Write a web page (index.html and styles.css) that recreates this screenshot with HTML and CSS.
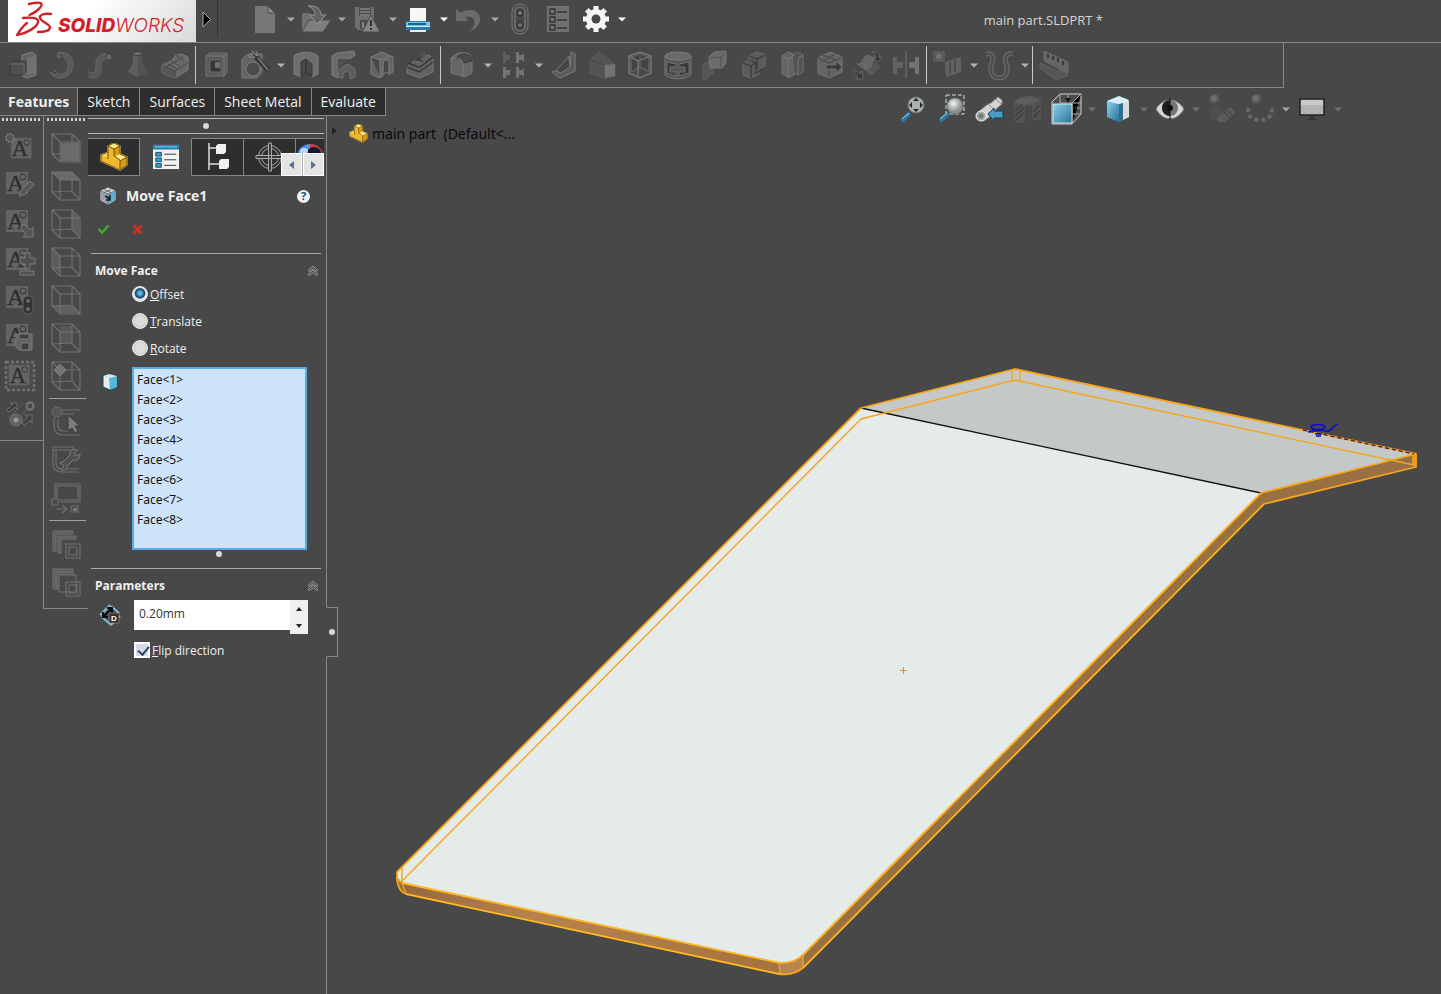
FILE: index.html
```html
<!DOCTYPE html>
<html lang="en">
<head>
<meta charset="utf-8">
<title>main part.SLDPRT *</title>
<link rel="stylesheet" href="styles.css">
</head>
<body>
<svg class="defs" width="0" height="0" aria-hidden="true">
  <defs>
    <linearGradient id="blue" x1="0" y1="0" x2="1" y2="1"><stop offset="0" stop-color="#8fd0ea"/><stop offset="1" stop-color="#2a7196"/></linearGradient>
    <radialGradient id="ball" cx="40%" cy="35%"><stop offset="0" stop-color="#f2f6f4"/><stop offset="1" stop-color="#87928f"/></radialGradient>
    <radialGradient id="dim" cx="40%" cy="35%"><stop offset="0" stop-color="#7c7c7c"/><stop offset="1" stop-color="#4a4a4a"/></radialGradient>
    <linearGradient id="edge" x1="0" y1="0" x2="1" y2="0"><stop offset="0" stop-color="#94683e"/><stop offset=".35" stop-color="#b8824d"/><stop offset="1" stop-color="#a5733f"/></linearGradient>
    <symbol id="caret" viewBox="0 0 8 5"><path d="M0 .5h8L4 4.5z" fill="currentColor"/></symbol>
    <symbol id="part" viewBox="0 0 28 28">
      <path d="M1 12l7-3V3l6-3 6 3v8l7 3v8l-7 5L1 18z" fill="#f4d25a" stroke="#fff2ae" stroke-width="1.2"/>
      <path d="M8 3l6 3v7l7 4v10L1 18v-6l7 3z" fill="#efb92e"/>
      <path d="M8 3l6-3 6 3-6 3zM14 12l6-2 7 4-7 4z" fill="#ffe98c"/>
      <path d="M14 6l6-3v8l-6 3zM20 18l7-4v8l-7 5z" fill="#d99c10"/>
      <path d="M1 12l7-3V3l6 3v7l6 4v10L1 18zM8 3l6-3 6 3-6 3M20 3v8l7 3-7 4M27 14v8l-7 5M8 9v7" fill="none" stroke="#72510d"/>
    </symbol>
    <symbol id="box" viewBox="0 0 30 30">
      <path d="M1 1h20l8 8v20H9l-8-8zM1 1l8 8h20M9 9v20M21 1v19M1 21l20-1 8 9" class="ln"/>
    </symbol>
    <symbol id="note" viewBox="0 0 30 30">
      <path d="M2 2h22v22H2z" fill="#646464"/><text x="3" y="21" class="note-a">A</text><circle cx="19" cy="7" r="3" fill="none" stroke="#343434" stroke-width="1"/>
    </symbol>
    <symbol id="up" viewBox="0 0 12 12"><path d="M1 5.500L6 1l5 4.500-1.500 1L6 3.500l-3.500 3zM1 9.500L6 5l5 4.500-1.500 1L6 7.500l-3.500 3z" fill="none" stroke="#b0b0b0" stroke-width=".8"/></symbol>
  </defs>
</svg>

<header class="titlebar">
  <div class="logo">
    <svg width="188" height="41" viewBox="0 0 188 41" role="img" aria-label="SOLIDWORKS">
      <g fill="none" stroke="#cf2127" stroke-width="2.400" stroke-linecap="round" stroke-linejoin="round">
        <path d="M21 4c5-1.500 12-2 12.500 0 .5 3-5 8-12 11"/>
        <path d="M15 18c9-1 16 0 15 4-1 5-10 11-21 13 3-5 6-9 10-12"/>
        <path d="M43 14c-7-1-12 1-11 4 1 4 11 6 10 10-1 3-6 4-12 4"/>
      </g>
      <text x="50" y="32"><tspan class="logo-bold">SOLID</tspan><tspan class="logo-light">WORKS</tspan></text>
    </svg>
  </div>
  <button class="logo-arrow" aria-label="Menu"><svg width="10" height="17" viewBox="0 0 10 17"><path d="M1 1l7.500 7.500L1 16z" fill="#000" stroke="#aaa"/></svg></button>
  <nav class="quick" aria-label="Quick access">
    <button class="qi" aria-label="New"><svg width="30" height="30" viewBox="0 0 30 30"><path d="M5 2h13l7 7v20H5z" fill="#777"/><path d="M18 2v7h7z" fill="#8d8d8d" stroke="#4d4d4d"/></svg></button><button class="qc" aria-label="New options"><svg width="8" height="5"><use href="#caret"/></svg></button>
    <button class="qi" aria-label="Open"><svg width="30" height="30" viewBox="0 0 30 30"><path d="M1 9h8l2 3h11v5l-6 9H1z" fill="#707070"/><path d="M8 16h22l-8 12H1z" fill="#7f7f7f" stroke="#4e4e4e"/><path d="M7 2c8-1 13 3 13 9h5l-9 9-7-9h5c0-4-2-7-7-9z" fill="#626262" stroke="#949494"/></svg></button><button class="qc" aria-label="Open options"><svg width="8" height="5"><use href="#caret"/></svg></button>
    <button class="qi" aria-label="Save"><svg width="30" height="30" viewBox="0 0 30 30"><path d="M3 3h19v19l-7 4H6l-3-3z" fill="#6f6f6f"/><path d="M7 3h12v9H7z" fill="#4b4b4b"/><path d="M8 5h10M8 8h10M8 11h10" stroke="#858585" stroke-width="1.500"/><path d="M8 16h8v9H8z" fill="#4b4b4b"/><path d="M10 18h2v6h-2z" fill="#888"/><path d="M19 11l9 17H10z" fill="#848484" stroke="#4a4a4a"/><path d="M19 16v6M19 24v2" stroke="#333" stroke-width="2"/></svg></button><button class="qc" aria-label="Save options"><svg width="8" height="5"><use href="#caret"/></svg></button>
    <button class="qi" aria-label="Print"><svg width="30" height="30" viewBox="0 0 30 30"><path d="M7 4h16v13H7z" fill="#f7f7f7"/><path d="M4 17h22l1 2v7H3v-7z" fill="#2b7ba5"/><path d="M3 18h24v4H3z" fill="#6dc5e8"/><path d="M5 19h18v2H5z" fill="#17678c"/><path d="M3 22h24v1H3z" fill="#d2edf7"/><path d="M7 26h16v2H7z" fill="#eee"/></svg></button><button class="qc on" aria-label="Print options"><svg width="8" height="5"><use href="#caret"/></svg></button>
    <button class="qi" aria-label="Undo"><svg width="30" height="30" viewBox="0 0 30 30"><path d="M2 5l4 4c9-6 20-3 20 6 0 6-4 10-10 12 7-8 6-16-5-14l4 4H2z" fill="#6b6b6b"/></svg></button><button class="qc" aria-label="Undo options"><svg width="8" height="5"><use href="#caret"/></svg></button>
    <button class="qi gap" aria-label="Rebuild"><svg width="30" height="32" viewBox="0 0 30 32"><rect x="7" y="1" width="16" height="30" rx="8" fill="#4a4a4a" stroke="#777"/><rect x="10" y="4" width="10" height="24" rx="5" fill="none" stroke="#686868" stroke-width="2"/><circle cx="15" cy="10" r="3.500" fill="#333"/><circle cx="15" cy="22" r="3.500" fill="#333"/><circle cx="15" cy="10" r="2" fill="#777"/><circle cx="15" cy="22" r="2" fill="#777"/></svg></button>
    <button class="qi gap" aria-label="File properties"><svg width="30" height="30" viewBox="0 0 30 30"><path d="M4 2h22v26H4z" fill="#717171"/><path d="M7 5h5v5H7zM7 13h5v5H7zM7 21h5v5H7zM14 8h10M14 16h10M14 24h10" fill="none" stroke="#333" stroke-width="1.400"/></svg></button>
    <button class="qi" aria-label="Options"><svg width="30" height="30" viewBox="0 0 30 30"><g stroke="#f5f5f5" stroke-width="5"><path d="M15 2v26M2 15h26M5.800 5.800l18.400 18.400M24.200 5.800L5.800 24.200"/></g><circle cx="15" cy="15" r="10" fill="#f5f5f5"/><circle cx="15" cy="15" r="4.500" fill="#484848"/></svg></button><button class="qc on" aria-label="Options list"><svg width="8" height="5"><use href="#caret"/></svg></button>
  </nav>
  <h1 class="doc-title">main part.SLDPRT *</h1>
</header>

<div class="ribbon" role="toolbar" aria-label="Features">
  <button aria-label="Extruded Boss"><svg width="30" height="30" viewBox="0 0 30 30"><path d="M14 5l10-3 4 3v20l-9 3-5-2z" fill="#686868" stroke="#888"/><path d="M19 8l8-2v17l-8 2z" fill="#777"/><path d="M2 14l3-3h13v10l-2 4H2z" fill="#505050" stroke="#363636"/><path d="M2 14h14v11" fill="none" stroke="#707070"/></svg></button>
  <button aria-label="Revolved Boss"><svg width="30" height="30" viewBox="0 0 30 30"><path d="M12 3c9-2 15 3 15 11 0 9-6 14-14 14-5 0-8-3-9-7h6c2 6 12 3 12-5 0-6-4-9-11-9z" fill="#5c5c5c" stroke="#6c6c6c"/><path d="M15 4l2 5M4 21l6 2" stroke="#333"/></svg></button>
  <button aria-label="Swept Boss"><svg width="30" height="30" viewBox="0 0 30 30"><path d="M5 25c9 4 10-3 10-10 1-8 5-9 9-7" fill="none" stroke="#5c5c5c" stroke-width="6"/><path d="M4 22c8 3 8-2 8-8 0-8 5-12 14-9" fill="none" stroke="#707070"/><circle cx="25" cy="7" r="3" fill="#707070" stroke="#444"/></svg></button>
  <button aria-label="Lofted Boss"><svg width="30" height="30" viewBox="0 0 30 30"><path d="M11 3h9c0 12 2 15 5 19l-9 5-10-5c4-5 5-9 5-19z" fill="#626262"/><path d="M16 4h4c0 12 2 15 5 19l-9 4z" fill="#555"/><ellipse cx="15.500" cy="3.500" rx="4.500" ry="2" fill="#777" stroke="#393939"/></svg></button>
  <button aria-label="Boundary Boss"><svg width="30" height="30" viewBox="0 0 30 30"><path d="M2 15l9-4 5-6 5-1 7 3v13l-13 8-13-5z" fill="#6e6e6e" stroke="#828282"/><path d="M2 16l13 5v7l-13-5z" fill="#5a5a5a"/><path d="M2 15l13 6 13-8M15 21v7M7 13l10 6M11 11l9 5M16 5l8 6M6 17l7-4 10-6" fill="none" stroke="#484848"/></svg></button>
  <span class="sep"></span>
  <button aria-label="Extruded Cut"><svg width="30" height="30" viewBox="0 0 30 30"><path d="M4 6l4-3h17v19l-3 4H4z" fill="#5c5c5c" stroke="#7d7d7d"/><path d="M4 6h18v20M22 6l3-3" fill="none" stroke="#888"/><path d="M8 10h11v12H8z" fill="#333" stroke="#777"/><path d="M13 12h5v6h-5z" fill="#777"/></svg></button>
  <button aria-label="Hole Wizard"><svg width="30" height="30" viewBox="0 0 30 30"><path d="M2 9l6-5h14v18l-5 6H2z" fill="#686868" stroke="#808080"/><circle cx="13" cy="19" r="7" fill="#4c4c4c" stroke="#888"/><path d="M13 4l15 16" stroke="#333" stroke-width="5"/><path d="M10 3l5 5M12 1l5 5M16 1l2 5M8 6l5 2M18 8l10 12" stroke="#858585" stroke-width="1.500"/></svg></button><button class="rc" aria-label="Hole options"><svg width="8" height="5"><use href="#caret"/></svg></button>
  <button aria-label="Revolved Cut"><svg width="30" height="30" viewBox="0 0 30 30"><path d="M3 6c5-5 19-5 24 0v18l-6 3V14l-6-5-5 5v13l-7-3z" fill="#747474" stroke="#888"/><path d="M15 9v14l-5 4V12zM15 9l6 5v12l-6-3z" fill="#4a4a4a" stroke="#333"/></svg></button>
  <button aria-label="Swept Cut"><svg width="30" height="30" viewBox="0 0 30 30"><path d="M3 6l5-3 17-2 1 4-4 3C13 10 9 15 9 28l-6-3z" fill="#707070" stroke="#888"/><path d="M9 9h12C14 11 10 17 9 26z" fill="#505050"/><path d="M9 27c0-9 7-14 12-12l5 4v8l-5 2v-6c-5-3-7-1-7 5z" fill="#606060" stroke="#797979"/></svg></button>
  <button aria-label="Lofted Cut"><svg width="30" height="30" viewBox="0 0 30 30"><path d="M4 7l11-5 11 5v15l-4 3V14c0-4-6-4-6 0v12l-4 2-8-4z" fill="#686868" stroke="#858585"/><path d="M4 7l9 3v17M13 10l11-4M16 24V13c0-4 6-4 6 0v9z" fill="#4a4a4a" stroke="#858585"/></svg></button>
  <button aria-label="Boundary Cut"><svg width="30" height="30" viewBox="0 0 30 30"><path d="M2 17l7-6c5 4 8-4 15-6l4 5v12l-13 6-13-5z" fill="#666" stroke="#808080"/><path d="M2 17l12 5 14-10M3 13l8 3c5 4 8-4 16-8M12 8l6 4" fill="none" stroke="#353535" stroke-width="1.500"/><circle cx="18" cy="5" r="3" fill="#555"/></svg></button>
  <span class="sep"></span>
  <button aria-label="Fillet"><svg width="30" height="30" viewBox="0 0 30 30"><path d="M4 8l7-5h8q6 1 6 8v12l-7 4-14-4z" fill="#6b6b6b" stroke="#808080"/><path d="M9 9q2-5 9-5 7 1 7 7l-9 2q0-5-7-4z" fill="#4a4a4a" stroke="#393939"/><path d="M4 8q12-1 12 6v12" fill="none" stroke="#858585"/></svg></button><button class="rc" aria-label="Fillet options"><svg width="8" height="5"><use href="#caret"/></svg></button>
  <button aria-label="Linear Pattern"><svg width="30" height="30" viewBox="0 0 30 30"><path d="M5 2h3v3h4v5H8v3H5z" fill="#606060"/><path d="M18 2h3v3h4V3h1v9h-1v-2h-4v3h-3zM5 17h3v3h4v5H8v3H5zM18 17h3v3h4v-2h1v9h-1v-2h-4v3h-3z" fill="#7b7b7b"/></svg></button><button class="rc" aria-label="Pattern options"><svg width="8" height="5"><use href="#caret"/></svg></button>
  <button aria-label="Rib"><svg width="30" height="30" viewBox="0 0 30 30"><path d="M22 2l4 2v17l-15 7-8-6 18-6z" fill="#5d5d5d" stroke="#858585"/><path d="M20 6L7 21l5 2 9-6z" fill="#444" stroke="#858585"/></svg></button>
  <button aria-label="Draft"><svg width="30" height="30" viewBox="0 0 30 30"><path d="M3 10l9-8 16 12v12l-11 2-14-5z" fill="#565656" stroke="#606060"/><path d="M17 15l11-1v12l-11 2z" fill="#797979"/><path d="M3 10l14 5v13" fill="none" stroke="#444"/></svg></button>
  <button aria-label="Shell"><svg width="30" height="30" viewBox="0 0 30 30"><path d="M4 6l11-4 11 4v17l-11 5-11-5z" fill="#4a4a4a" stroke="#7c7c7c" stroke-width="1.500"/><path d="M15 3v14l-9 5V8zM15 17l9 5V8l-9-5" fill="#434343" stroke="#757575"/><path d="M4 6l9 5v15M13 11l13-5" fill="none" stroke="#808080" stroke-width="1.300"/></svg></button>
  <button aria-label="Wrap"><svg width="30" height="30" viewBox="0 0 30 30"><path d="M2 6v19c5 5 21 5 26 0V6" fill="#5a5a5a" stroke="#7f7f7f"/><ellipse cx="15" cy="6" rx="13" ry="4" fill="#6e6e6e" stroke="#888"/><path d="M4 12l9 2v3H7v5h6v4L4 23zM16 14l10-2v11l-10 3v-4h6v-5h-6z" fill="#383838" stroke="#777"/></svg></button>
  <button aria-label="Intersect"><svg width="30" height="30" viewBox="0 0 30 30"><path d="M2 15l5-4h5v13H9l-3 5H2z" fill="#575757" stroke="#646464"/><path d="M8 7l5-5 12-1v12l-4 5H9z" fill="#707070" stroke="#808080"/><path d="M9 8l11-1v10M20 7l5-5" fill="none" stroke="#555"/></svg></button>
  <button aria-label="Combine"><svg width="30" height="30" viewBox="0 0 30 30"><path d="M4 13l6-3V6l7-4 9 2v12l-6 4v4l-8 4-8-3z" fill="#5e5e5e" stroke="#707070"/><path d="M4 13l8 3v12M10 6l8 3v10M18 9l8-4M12 16l5-3v10l8-5M10 10l7 3" fill="none" stroke="#3b3b3b" stroke-width="1.300"/></svg></button>
  <button aria-label="Split"><svg width="30" height="30" viewBox="0 0 30 30"><path d="M5 6l6-4 7 3v19l-6 4-7-4z" fill="#676767" stroke="#7d7d7d"/><path d="M15 6l5-4 6 3v17l-5 3-4-2z" fill="#555" stroke="#777"/><path d="M5 6l6 3v18M11 9l6-4M21 8v16M21 8l5-3" fill="none" stroke="#808080"/></svg></button>
  <button aria-label="Move Face"><svg width="30" height="30" viewBox="0 0 30 30"><path d="M3 8l12-6 12 5v15l-13 6-11-5z" fill="#686868" stroke="#808080"/><path d="M3 8l11 5 13-6M14 13v15M8 5l12 5M20 4L8 11" fill="none" stroke="#484848"/><path d="M11 15h10v-4l6 6-6 6v-4H11z" fill="#393939" stroke="#707070"/></svg></button>
  <button aria-label="Flex"><svg width="30" height="30" viewBox="0 0 30 30"><path d="M2 13c9 3 6-9 14-8l9 4c-7 0-4 13-13 11z" fill="#6c6c6c"/><path d="M12 20c8 2 6-8 12-7l4 5c-6 0-5 9-12 7z" fill="#5b5b5b"/><path d="M19 2c5-1 8 2 7 6l3-1-4 5-5-4h3c0-3-1-5-4-6zM2 20l5 4 2-3 1 8H3l2-3-4-4z" fill="#333" stroke="#808080" stroke-width=".7"/></svg></button>
  <button aria-label="Mirror"><svg width="30" height="30" viewBox="0 0 30 30"><path d="M2 7h4v5h6v6H6v6H2z" fill="#666"/><path d="M28 7h-4v5h-6v6h6v6h4z" fill="#7c7c7c"/><path d="M15 1v27" stroke="#808080"/></svg></button>
  <span class="sep"></span>
  <button aria-label="Reference Geometry"><svg width="30" height="30" viewBox="0 0 30 30"><path d="M1 2h10v9H1z" fill="#555" stroke="#717171"/><circle cx="6" cy="6.500" r="3" fill="#777"/><path d="M12 12l16-5v15l-15 5z" fill="#666"/><path d="M17 12v12M22 10v12" stroke="#464646" stroke-width="1.500"/></svg></button><button class="rc" aria-label="Reference options"><svg width="8" height="5"><use href="#caret"/></svg></button>
  <button aria-label="Curves"><svg width="30" height="30" viewBox="0 0 30 30"><path d="M2 4c7-1 8 3 6 9-3 8 0 15 7 15s10-7 7-15c-2-6 0-10 7-9" fill="none" stroke="#707070" stroke-width="5"/><path d="M2 4c7-1 8 3 6 9-3 8 0 15 7 15s10-7 7-15c-2-6 0-10 7-9" fill="none" stroke="#4e4e4e" stroke-width="2.500"/></svg></button><button class="rc" aria-label="Curve options"><svg width="8" height="5"><use href="#caret"/></svg></button>
  <span class="sep"></span>
  <button aria-label="Instant3D"><svg width="30" height="30" viewBox="0 0 30 30"><path d="M5 1l24 11v11L5 11z" fill="#6a6a6a" stroke="#707070"/><path d="M9 4v4M14 6v4M19 8v4M24 11v4" stroke="#363636" stroke-width="2"/><path d="M1 13l19 9v-3l9 6-9 4h-4L1 18z" fill="#585858" stroke="#6a6a6a"/></svg></button>
</div>

<main class="workspace">
  <svg class="model" viewBox="0 88 1441 906" role="img" aria-label="Part model">
    <path d="M861 408L397 872v8c0 8 3 13 9 14l373 80c10 2 18 0 25-7L1264 504l152-37v-13L1015 369z" fill="#987042"/>
    <path d="M405 884l375 79v11l-374-80q-6-2-8-10z" fill="url(#edge)"/>
    <path d="M780 963q14 0 23-8v12q-9 9-24 7z" fill="#b68450"/>
    <path d="M861 408L1261 493 803 954q-9 10-23 9L402 883l-5-6v-5z" fill="#e4ebe8"/>
    <path d="M861 408L1015 369l401 85-155 39z" fill="#c4c8c7"/>
    <path d="M1385 461l31-7v12z" fill="#8b7448"/>
    <path d="M861 408L1261 493" stroke="#111" stroke-width="1.300"/>
    <g fill="none" stroke="#f7a51c" stroke-width="1.400" stroke-linejoin="round">
      <path d="M861 408L1015 369l401 85v13l-152 37L804 967q-10 9-25 7L406 894q-7-2-9-14v-8z" stroke-width="1.800"/>
      <path d="M1416 454l-155 39L803 955q-9 9-23 8L402 883" stroke-width="1.800"/>
      <path d="M1414 465L1019 381q-4-1-8 0L861 419 401 882M1012 370v11M1020 370v11M1413 456v8"/>
      <path d="M402 868v15l4 11M398 880l4 3M779 963l1 11M803 955v12"/>
    </g>
    <path d="M402 883l378 80M406 894l373 80M1261 493L803 955M1264 504L804 967" stroke="#ffc424"/>
    <path d="M1414 455v11" stroke="#f79a1c" stroke-width="3"/>
    <path d="M1303 430l111 24" stroke="#3c1a46" stroke-width="1.300" stroke-dasharray="4 3"/>
    <g fill="none" stroke="#1010c8" stroke-width="1.600"><ellipse cx="1318" cy="427" rx="7" ry="2.500"/><path d="M1308 432c7-1 11-3 18-1 5 2 7-6 12-7M1311 427l4 4 9-1M1315 434h7M1316 436h5"/></g>
    <path d="M900 670.500h7M903.500 667v7" stroke="#f58a2c"/>
  </svg>

  <nav class="tabs" aria-label="Command manager">
    <button class="tab active">Features</button><button class="tab">Sketch</button><button class="tab">Surfaces</button><button class="tab">Sheet Metal</button><button class="tab">Evaluate</button>
  </nav>

  <div class="hud" role="toolbar" aria-label="View">
    <button aria-label="Zoom to fit"><svg width="30" height="30" viewBox="0 0 30 30"><path d="M3 27l8-8" stroke="#2b7ba5" stroke-width="4"/><path d="M3 25l7-6" stroke="#9ad5ee"/><circle cx="17" cy="11" r="8" fill="#a9b0b0" stroke="#6d7575"/><path d="M17 4l3 3h-6zM17 18l3-3h-6zM10 11l3-3v6zM24 11l-3-3v6z" fill="#252525"/></svg></button>
    <button aria-label="Zoom to area"><svg width="30" height="30" viewBox="0 0 30 30"><path d="M9 1h18v19H9z" fill="none" stroke="#ddd" stroke-dasharray="4 2"/><path d="M3 27l9-8" stroke="#2b7ba5" stroke-width="4"/><path d="M3 25l7-6" stroke="#9ad5ee"/><circle cx="18" cy="12" r="8" fill="url(#ball)" stroke="#737b7b"/></svg></button>
    <button aria-label="Previous view"><svg width="30" height="30" viewBox="0 0 30 30"><path d="M2 19l11-9 3-1 7-6 4 3v4l-6 5-1 4-11 8-6-2z" fill="#d4d3cd" stroke="#858585"/><path d="M13 10l7 6M21 5l5 5" stroke="#888"/><circle cx="6" cy="22" r="5" fill="#aaa9a2" stroke="#eee"/><circle cx="6" cy="22" r="2.500" fill="#777"/><path d="M13 20l6-6v3h9v7h-9v3z" fill="#4b9dc4" stroke="#133f56"/></svg></button>
    <button aria-label="Section view"><svg width="30" height="30" viewBox="0 0 30 30"><path d="M2 8c5-7 20-7 25-2v19h-7V12c-5-3-9-1-9 3v13H2z" fill="#505050" stroke="#5c5c5c"/><path d="M2 8c5-6 20-6 25-2l-7 4c-4-2-8 0-9 3z" fill="#5e5e5e"/><path d="M2 17l8-7M2 22l9-8M2 27l9-8M20 18l7-7M20 24l7-7" stroke="#303030"/></svg></button>
    <button aria-label="View orientation"><svg width="32" height="32" viewBox="0 0 32 32"><path d="M2 9l8-8h21v20L22 31H2z" fill="#4c4c4c" stroke="#d2d2d2"/><path d="M10 1v9M10 10h21M22 31V10l9-9M22 21h9M18 2v6M31 15h-8" stroke="#aaa"/><path d="M15 5h6l-3 5zM27 12v6l-5-3z" fill="#191919"/><path d="M3 11h19v19H3z" fill="url(#blue)" stroke="#cce7f2"/></svg></button><button class="hc" aria-label="Orientation options"><svg width="8" height="5"><use href="#caret"/></svg></button>
    <button aria-label="Display style"><svg width="30" height="30" viewBox="0 0 30 30"><path d="M4 7l12-5 10 4v17l-10 5-12-5z" fill="#eee" stroke="#27576d"/><path d="M4 7l12 3v18L4 23z" fill="url(#blue)"/><path d="M4 7l12-5 10 4-10 4z" fill="#d9edf4"/><path d="M16 10l4-1v17l-4 2z" fill="#2f6f90"/><path d="M20 9l6-2v16l-6 3z" fill="#dcdcdc"/></svg></button><button class="hc" aria-label="Style options"><svg width="8" height="5"><use href="#caret"/></svg></button>
    <button aria-label="Hide or show"><svg width="30" height="30" viewBox="0 0 30 30"><path d="M1 15C8 3 22 3 29 15 22 28 8 28 1 15z" fill="#d7d6d1" stroke="#7d7c77"/><circle cx="15" cy="14" r="8" fill="#777"/><path d="M15 6a8 8 0 0 0 0 16z" fill="#202020"/><circle cx="15" cy="14" r="3" fill="#111"/><path d="M15 4v22" stroke="#111"/></svg></button><button class="hc" aria-label="Visibility options"><svg width="8" height="5"><use href="#caret"/></svg></button>
    <button aria-label="Edit appearance"><svg width="30" height="30" viewBox="0 0 30 30"><circle cx="8" cy="6" r="6" fill="url(#dim)"/><circle cx="10" cy="19" r="8" fill="#4e4e4e"/><path d="M11 24l12-10 5 4-10 9-5 1z" fill="#595959" stroke="#646464"/><path d="M17 18l5 5M20 16l5 5" stroke="#3b3b3b"/></svg></button>
    <button aria-label="Apply scene"><svg width="30" height="30" viewBox="0 0 30 30"><circle cx="12" cy="6" r="6" fill="url(#dim)"/><path d="M4 14c-4 8 5 12 11 12s15-4 11-12" stroke="#686868" stroke-width="4" stroke-dasharray="4 3" fill="none"/></svg></button><button class="hc lit" aria-label="Scene options"><svg width="8" height="5"><use href="#caret"/></svg></button>
    <button aria-label="View settings"><svg width="30" height="30" viewBox="0 0 30 30"><path d="M3 5h24v16H3z" fill="#b4b4b4" stroke="#222" stroke-width="1.500"/><path d="M4 6h22v5H4z" fill="#c8c8c8"/><path d="M13 21h4v4h3v1H10v-1h3z" fill="#333"/></svg></button><button class="hc" aria-label="Settings options"><svg width="8" height="5"><use href="#caret"/></svg></button>
  </div>

  <div class="docks">
    <div class="dock first" role="toolbar" aria-label="Annotations">
      <button aria-label="New note"><svg width="32" height="32" viewBox="0 0 32 32"><use href="#note" x="5" y="4" width="28" height="28"/><circle cx="6" cy="6" r="4" fill="#555" stroke="#808080" stroke-width="1.500" stroke-dasharray="2 1"/></svg></button>
      <button aria-label="Edit note"><svg width="32" height="32" viewBox="0 0 32 32"><use href="#note" width="30" height="30"/><path d="M15 26l2-6 9-9 4 4-9 9z" fill="#575757" stroke="#7c7c7c"/></svg></button>
      <button aria-label="Insert note"><svg width="32" height="32" viewBox="0 0 32 32"><use href="#note" width="30" height="30"/><path d="M17 17h4l5 5 3-3v10H19l3-3-5-5z" fill="#555" stroke="#7c7c7c"/></svg></button>
      <button aria-label="Add or remove"><svg width="32" height="32" viewBox="0 0 32 32"><use href="#note" width="30" height="30"/><path d="M16 12h5V7h5v5h5v6h-5v5h-5v-5h-5zM16 25h14v4H16z" fill="#515151" stroke="#7c7c7c"/></svg></button>
      <button aria-label="Update note"><svg width="32" height="32" viewBox="0 0 32 32"><use href="#note" width="30" height="30"/><rect x="19" y="12" width="10" height="18" rx="5" fill="#333" stroke="#606060"/><circle cx="24" cy="17" r="2" fill="#6a6a6a"/><circle cx="24" cy="25" r="2" fill="#6a6a6a"/></svg></button>
      <button aria-label="Save note"><svg width="32" height="32" viewBox="0 0 32 32"><use href="#note" width="30" height="30"/><path d="M12 12h16v16H15l-3-3z" fill="#626262" stroke="#7c7c7c"/><path d="M15 12h10v5H15zM17 21h8v7h-8z" fill="#3f3f3f" stroke="#7c7c7c"/></svg></button>
      <button aria-label="Note stamp"><svg width="34" height="34" viewBox="0 0 34 34"><path d="M3 3h28v28H3z" fill="#4b4b4b" stroke="#707070" stroke-width="2.500" stroke-dasharray="3 2"/><use href="#note" x="4" y="4" width="28" height="28"/></svg></button>
      <button aria-label="Link note"><svg width="32" height="32" viewBox="0 0 32 32"><path d="M3 11l6-6-3-1h7v7l-2-3-6 5zM20 26l6-5 2 3v-8h-7l3 2-6 6z" fill="#3c3c3c" stroke="#777" stroke-width=".8" transform="translate(0 1)"/><circle cx="12" cy="22" r="6" fill="#606060" stroke="#757575"/><circle cx="12" cy="22" r="2.500" fill="#999"/><circle cx="26" cy="8" r="3.500" fill="none" stroke="#777" stroke-width="2"/><path d="M4 20L20 5M17 17l7-7" stroke="#606060"/></svg></button>
    </div>
    <div class="dock second" role="toolbar" aria-label="Standard views">
      <button aria-label="Front"><svg width="32" height="32" viewBox="0 0 32 32"><use href="#box" x="1" y="1" width="30" height="30"/><path d="M11 11h18v18H11z" fill="#6b6b6b"/></svg></button>
      <button aria-label="Top"><svg width="32" height="32" viewBox="0 0 32 32"><path d="M3 2h19l8 8H10z" fill="#6a6a6a"/><use href="#box" x="1" y="1" width="30" height="30"/></svg></button>
      <button aria-label="Right"><svg width="32" height="32" viewBox="0 0 32 32"><path d="M22 3l7 7v18l-7-7z" fill="#5c5c5c"/><use href="#box" x="1" y="1" width="30" height="30"/></svg></button>
      <button aria-label="Left"><svg width="32" height="32" viewBox="0 0 32 32"><path d="M3 3l7 7v18l-7-7z" fill="#5c5c5c"/><use href="#box" x="1" y="1" width="30" height="30"/></svg></button>
      <button aria-label="Bottom"><svg width="32" height="32" viewBox="0 0 32 32"><path d="M3 22h19l7 7H10z" fill="#606060"/><use href="#box" x="1" y="1" width="30" height="30"/></svg></button>
      <button aria-label="Back"><svg width="32" height="32" viewBox="0 0 32 32"><path d="M10 4h12v17H10z" fill="#585858"/><use href="#box" x="1" y="1" width="30" height="30"/></svg></button>
      <button aria-label="Isometric"><svg width="32" height="32" viewBox="0 0 32 32"><use href="#box" x="1" y="1" width="30" height="30"/><path d="M10 4l6 6-6 6-6-6z" fill="#747474" stroke="#7c7c7c"/></svg></button>
      <hr>
      <button aria-label="New sketch"><svg width="32" height="32" viewBox="0 0 32 32"><path d="M11 4h19M4 12v8q0 9 9 9h17M8 13v7q0 5 6 5h5M12 8h12" class="ln"/><circle cx="7" cy="6" r="5" fill="#555" stroke="#7c7c7c" stroke-dasharray="2 1"/><path d="M18 9v16l4-3 3 5 3-2-3-5h5z" fill="#7d7d7d" stroke="#393939"/></svg></button>
      <button aria-label="Repair sketch"><svg width="32" height="32" viewBox="0 0 32 32"><path d="M3 3h20M3 3v16q0 9 9 9h17M6 6v13q0 6 6 6h17M3 3v3h20V3" class="ln"/><path d="M10 19l4-2 6-6c-1-4 4-7 8-5l-4 3 2 3 4-2c0 5-3 7-7 6l-6 6c0 4-3 5-6 4l3-4z" fill="#505050" stroke="#7c7c7c"/></svg></button>
      <button aria-label="Sketch block"><svg width="32" height="32" viewBox="0 0 32 32"><path d="M5 16V2h25v18H10M7 16V4h21v14H9M2 17h6v6H2zM21 24h7v6h-7zM6 27h10M12 23l5 4-5 4" class="ln"/><path d="M23 26h4v3h-4z" fill="#777"/></svg></button>
      <hr>
      <button aria-label="Group"><svg width="32" height="32" viewBox="0 0 32 32"><path d="M3 23V3h20v3H6v17zM8 25V8h18v3H11v14z" fill="#5e5e5e" stroke="#707070"/><path d="M16 16h14v14H16zM19 19h8v8h-8z" class="ln"/></svg></button>
      <button aria-label="Ungroup"><svg width="32" height="32" viewBox="0 0 32 32"><path d="M3 3h20v20H3zM6 6h14v14H6z" fill="#5e5e5e" stroke="#707070"/><path d="M9 9h17v17H9z" fill="#484848" stroke="#707070"/><path d="M16 16h14v14H16zM19 19h8v8h-8z" class="ln"/></svg></button>
    </div>

    <aside class="panel">
      <div class="grip"><i class="dot"></i></div>
      <nav class="ptabs" aria-label="Managers">
        <button aria-label="FeatureManager"><svg width="28" height="28"><use href="#part"/></svg></button>
        <button class="active" aria-label="PropertyManager"><svg width="28" height="26" viewBox="0 0 30 28"><path d="M1 1h28v26H1z" fill="#f2f2ef"/><path d="M1 1h28v5H1z" fill="#2c83b0"/><path d="M3 3h24" stroke="#7fd0f2"/><path d="M4 9h6v4H4zM4 15h6v4H4zM4 21h6v4H4z" fill="#3aa0cd" stroke="#194b66"/><path d="M13 11h13M13 17h13M13 23h13" stroke="#333"/></svg></button>
        <button aria-label="ConfigurationManager"><svg width="28" height="30" viewBox="0 0 28 30"><path d="M5 1v27M5 6h8M5 22h10" stroke="#ddd" stroke-width="1.500"/><path d="M12 4l2-2h8v8l-2 2h-8zM15 19l2-2h8v8l-2 2h-8z" fill="#f1f1f1"/></svg></button>
        <button aria-label="DimXpertManager"><svg width="30" height="30" viewBox="0 0 30 30"><g fill="none" stroke="#aaa"><circle cx="15" cy="15" r="11.500"/><circle cx="15" cy="15" r="8.500"/><path d="M13.500 1h3v28h-3zM1 13.500h28v3H1z" fill="#383838"/></g></svg></button>
        <button class="cut" aria-label="DisplayManager"><svg width="28" height="28" viewBox="0 0 28 28"><circle cx="14" cy="14" r="13" fill="#5790e8"/><path d="M14 1c8 0 13 5 13 13H14z" fill="#d43a3a"/><ellipse cx="18" cy="10" rx="7" ry="6" fill="#17172b"/><ellipse cx="8" cy="8" rx="4" ry="3" fill="#b9d7fa"/></svg></button>
        <span class="scroll"><button aria-label="Scroll left"><svg width="5" height="8"><path d="M5 0v8L0 4z" fill="#5a6e9d"/></svg></button><button aria-label="Scroll right"><svg width="5" height="8"><path d="M0 0v8l5-4z" fill="#5a6e9d"/></svg></button></span>
      </nav>

      <div class="ptitle">
        <svg width="16" height="18" viewBox="0 0 16 18"><path d="M1 4l7-3 7 3v9l-7 4-7-4z" fill="#c9d3d7" stroke="#ddd"/><path d="M1 4l7 3v10l-7-4z" fill="#9aa5a9"/><path d="M8 7l7-3v9l-7 4z" fill="#5fb0d4"/><path d="M1 4l7 3 7-3M8 7v10M4 2.500l7 3M11 2.500l-7 3" fill="none" stroke="#555" stroke-width=".7"/><path d="M5 9l5 3M10 8v5H6" fill="none" stroke="#1c1c1c" stroke-width="1.500"/></svg>
        <h2>Move Face1</h2>
        <button class="help" aria-label="Help">?</button>
      </div>
      <div class="confirm">
        <button aria-label="OK"><svg width="13" height="12" viewBox="0 0 14 12"><path d="M1.500 6l4 4 7-8" fill="none" stroke="#3fae2a" stroke-width="2.600"/></svg></button>
        <button aria-label="Cancel"><svg width="11" height="11" viewBox="0 0 11 11"><path d="M1.500 1.500l8 8M9.500 1.500l-8 8" stroke="#d6301b" stroke-width="2.600"/></svg></button>
      </div>

      <section class="group">
        <h3>Move Face <button aria-label="Collapse Move Face"><svg width="12" height="12"><use href="#up"/></svg></button></h3>
        <div class="radios">
          <label><input type="radio" name="mode" checked><span><u>O</u>ffset</span></label>
          <label><input type="radio" name="mode"><span><u>T</u>ranslate</span></label>
          <label><input type="radio" name="mode"><span><u>R</u>otate</span></label>
        </div>
        <div class="faces">
          <label for="faces" aria-label="Faces"><svg width="16" height="18" viewBox="0 0 16 18"><path d="M1 3l6-2 8 2v11l-7 3-7-3z" fill="#e7eef0" stroke="#1d4356"/><path d="M7 5l8-2v11l-7 3z" fill="#53b4dd"/><path d="M1 3l6-2 8 2-8 2z" fill="#cfe6ef"/></svg></label>
          <select id="faces" multiple size="8">
            <option>Face&lt;1&gt;</option><option>Face&lt;2&gt;</option><option>Face&lt;3&gt;</option><option>Face&lt;4&gt;</option><option>Face&lt;5&gt;</option><option>Face&lt;6&gt;</option><option>Face&lt;7&gt;</option><option>Face&lt;8&gt;</option>
          </select>
        </div>
        <i class="dot"></i>
      </section>

      <section class="group">
        <h3>Parameters <button aria-label="Collapse Parameters"><svg width="12" height="12"><use href="#up"/></svg></button></h3>
        <div class="distance">
          <label for="distance" aria-label="Distance"><svg width="22" height="22" viewBox="0 0 22 22"><path d="M2 12L12 2l8 8-9 10z" fill="#444" stroke="#999"/><path d="M1 11L11 1M12 21l9-9M3 13l9 8M12 2l8 7" fill="none" stroke="#7bc0de" stroke-width="1.800"/><path d="M4 13l8-8M4 8v5h5M8 4h5v5" stroke="#0d0d0d" stroke-width="2" fill="none"/><rect x="10" y="9" width="10" height="10" fill="#333" stroke="#aaa" stroke-width=".5"/><text x="12" y="17" class="d-letter">D</text></svg></label>
          <input id="distance" type="text" value="0.20mm">
          <span class="spin"><button aria-label="Increase"><svg width="6" height="4"><path d="M0 4h6L3 0z" fill="#222"/></svg></button><button aria-label="Decrease"><svg width="6" height="4"><path d="M0 0h6L3 4z" fill="#222"/></svg></button></span>
        </div>
        <label class="flip"><input type="checkbox" checked><span><u>F</u>lip direction</span></label>
      </section>
      <button class="handle" aria-label="Collapse panel"><i class="dot"></i></button>
    </aside>

    <button class="tree">
      <svg class="expand" width="5" height="8"><path d="M0 0v8l5-4z" fill="#222"/></svg>
      <svg width="19" height="19"><use href="#part"/></svg>
      <span>main part  (Default&lt;...</span>
    </button>
  </div>
</main>
</body>
</html>
```

FILE: styles.css
```css
* { box-sizing: border-box; }

body {
  margin: 0;
  min-height: 100vh;
  display: flex;
  flex-direction: column;
  background: #484848;
  color: #f0f0f0;
  font: 12px/16px "Open Sans", "Noto Sans", sans-serif;
}

button {
  display: flex;
  align-items: center;
  justify-content: center;
  flex: none;
  margin: 0;
  padding: 0;
  border: 0;
  background: none;
  color: inherit;
  font: inherit;
}

svg { display: block; flex: none; }
h1, h2, h3 { margin: 0; }
.defs { position: absolute; }
.ln { fill: none; stroke: #707070; stroke-width: 1.2; }

.note-a { font: 24px "Liberation Serif", serif; fill: #2e2e2e; stroke: #2e2e2e; stroke-width: .4px; }
.d-letter { font: bold 8px "Liberation Sans", sans-serif; fill: #fff; }

/* Title bar */
.titlebar {
  display: flex;
  align-items: flex-start;
  height: 43px;
  border-bottom: 1px solid #858783;
}
.logo {
  width: 188px;
  height: 42px;
  margin-left: 8px;
  background: linear-gradient(135deg, #fff 40%, #d9d9d9);
}
.logo-bold { font: italic 800 19px Inter, sans-serif; fill: #cf2127; }
.logo-light { font: italic 300 19px Inter, sans-serif; fill: #cf2127; }
.logo-arrow { width: 22px; height: 38px; border-right: 1px solid #333; }
.quick { display: flex; height: 38px; margin-left: 30px; }
.qi { width: 34px; }
.qi.gap { margin-right: 4px; }
.qc { width: 17px; color: #a8a8a8; }
.qc.on { color: #fff; }
.doc-title {
  margin-left: auto;
  margin-right: 338px;
  font-size: 13px;
  font-weight: 400;
  line-height: 40px;
  color: #d6d6d6;
}

/* Feature ribbon */
.ribbon {
  display: flex;
  align-self: flex-start;
  width: 1284px;
  max-width: 100%;
  height: 45px;
  padding-left: 4px;
  border: solid #858783;
  border-width: 0 1px 1px 0;
}
.ribbon button { width: 38px; }
.ribbon button:not(.rc) svg { opacity: .88; }
.ribbon .rc { width: 13px; color: #b4b4b4; }
.sep { width: 1px; margin: 3px 2px 3px 1px; background: #c9c9c9; }

/* Workspace */
.workspace {
  position: relative;
  flex: 1;
  display: flex;
  flex-direction: column;
}
.model { position: absolute; inset: 0; width: 100%; height: 100%; }

.tabs {
  position: relative;
  display: flex;
  align-self: flex-start;
  height: 28px;
  border-bottom: 1px solid #858783;
}
.tab {
  padding: 0 9px;
  border-right: 1px solid #858783;
  background: #2e2e2e;
  font-size: 14px;
}
.tab.active { padding: 0 8px; background: none; font-weight: 700; }

.hud { position: absolute; top: 5px; right: 96px; display: flex; height: 32px; }
.hud button { width: 38px; }
.hud .hc { width: 14px; color: #707070; }
.hud .lit { color: #a5a5a5; }

.docks { position: relative; flex: 1; display: flex; align-items: flex-start; }
.dock {
  width: 44px;
  padding: 13px 5px 7px 3px;
  border: solid #858783;
  border-width: 0 1px 1px 0;
  background: repeating-linear-gradient(90deg, #d0d0d0 0 2px, transparent 2px 4px) 2px 2px / 38px 3px no-repeat;
}
.dock button { width: 34px; height: 38px; }
.second {
  margin-left: -1px;
  width: 45px;
  padding: 13px 2px 7px 5px;
  border-width: 0 0 1px 1px;
  background-position: 3px 2px;
}
.dock hr { height: 1px; margin: 3px 0 4px; border: 0; background: #a0a0a0; }

/* Property panel */
.panel {
  position: relative;
  align-self: stretch;
  width: 239px;
  border-right: 1px solid #858783;
}
.grip {
  display: flex;
  justify-content: center;
  align-items: center;
  height: 16px;
  margin: 2px 2px 4px 0;
  border: solid #b8b8b8;
  border-width: 1px 0;
}
.dot { width: 6px; height: 6px; border-radius: 3px; background: #d8d8d8; }
.ptabs {
  position: relative;
  display: flex;
  height: 38px;
  margin-right: 2px;
  overflow: hidden;
}
.ptabs > button {
  width: 52px;
  border: 1px solid #858783;
  border-left-width: 0;
  background: #2e2e2e;
}
.ptabs > .active { border-color: transparent #858783 transparent transparent; background: none; }
.ptabs > .cut { width: 29px; overflow: hidden; }
.scroll {
  position: absolute;
  right: 0;
  bottom: 0;
  display: flex;
  gap: 1px;
  height: 23px;
  background: #aaa;
}
.scroll button { width: 21px; border: 1px solid #fff; background: #e4e4e4; }

.ptitle {
  display: flex;
  align-items: center;
  gap: 10px;
  height: 40px;
  padding: 0 16px 0 12px;
}
.ptitle h2 { flex: 1; font-size: 14px; }
.help {
  width: 13px;
  height: 13px;
  border-radius: 50%;
  background: #eaf4fa;
  color: #164d70;
  font-size: 11px;
  font-weight: 700;
}
.confirm { display: flex; align-items: center; gap: 22px; height: 26px; padding-left: 9px; }
.group { margin: 11px 5px 0 3px; border-top: 1px solid #a8a8a8; }
.group h3 {
  display: flex;
  align-items: center;
  justify-content: space-between;
  height: 27px;
  margin-top: 3px;
  padding: 0 2px 0 4px;
  font-size: 12px;
}
.radios { margin-top: -4px; }
.radios label { display: flex; align-items: center; height: 27px; padding-left: 41px; gap: 2px; }
.radios input, .flip input { appearance: none; flex: none; margin: 0; }
.radios input {
  width: 16px;
  height: 16px;
  border: 1px solid #eee;
  border-radius: 50%;
  background: radial-gradient(#ddd 40%, #bbb);
}
.radios input:checked { background: radial-gradient(circle at 50% 45%, #5fb5df 0 15%, #123f60 45%, #dbe4e8 55%); }
.radios span { padding-top: 2px; }

.faces { display: flex; margin-top: 6px; }
.faces label { width: 41px; padding: 6px 0 0 11px; }
.faces select {
  flex: 1;
  height: 183px;
  margin-right: 14px;
  padding: 1px 0;
  overflow: hidden;
  border: 2px solid #56aee2;
  border-radius: 0;
  outline: 0;
  background: #cde3f8;
  color: #111;
  font: 12px/16px "Noto Sans", "Open Sans", sans-serif;
}
.faces option { height: 20px; min-height: 20px; padding: 1px 3px 2px; }
.group > .dot { display: block; margin: 1px auto 0 125px; }

.distance { display: flex; margin-top: 1px; }
.distance label { width: 43px; padding: 4px 0 0 8px; }
.distance input {
  flex: 1;
  min-width: 0;
  height: 30px;
  padding: 0 5px 4px;
  border: 0;
  background: #fff;
  color: #333;
  font: inherit;
}
.spin { width: 18px; height: 34px; margin-right: 13px; background: #f0f0f0; }
.spin button { width: 18px; height: 17px; }
.flip { display: flex; gap: 2px; margin-top: 8px; padding-left: 43px; }
.flip input { width: 16px; height: 16px; border: 2px solid #fff; background: #d5dbe4; }
.flip input:checked::after {
  content: "";
  display: block;
  width: 5px;
  height: 9px;
  margin: 0 0 0 4px;
  border: solid #29436e;
  border-width: 0 2px 2px 0;
  transform: rotate(40deg);
}
.flip span { padding-top: 1px; }

.handle {
  position: absolute;
  top: 491px;
  right: -12px;
  width: 12px;
  height: 50px;
  border: 1px solid #858783;
  border-left-color: #484848;
  background: #484848;
}

.tree {
  position: relative;
  height: 20px;
  margin: 7px 0 0 5px;
  color: #080808;
  font-family: "Noto Sans", "Open Sans", sans-serif;
  font-size: 14px;
  white-space: pre;
}
.tree .expand { margin: -4px 12px 0 0; }
.tree span { margin: 2px 0 0 4px; }
```
